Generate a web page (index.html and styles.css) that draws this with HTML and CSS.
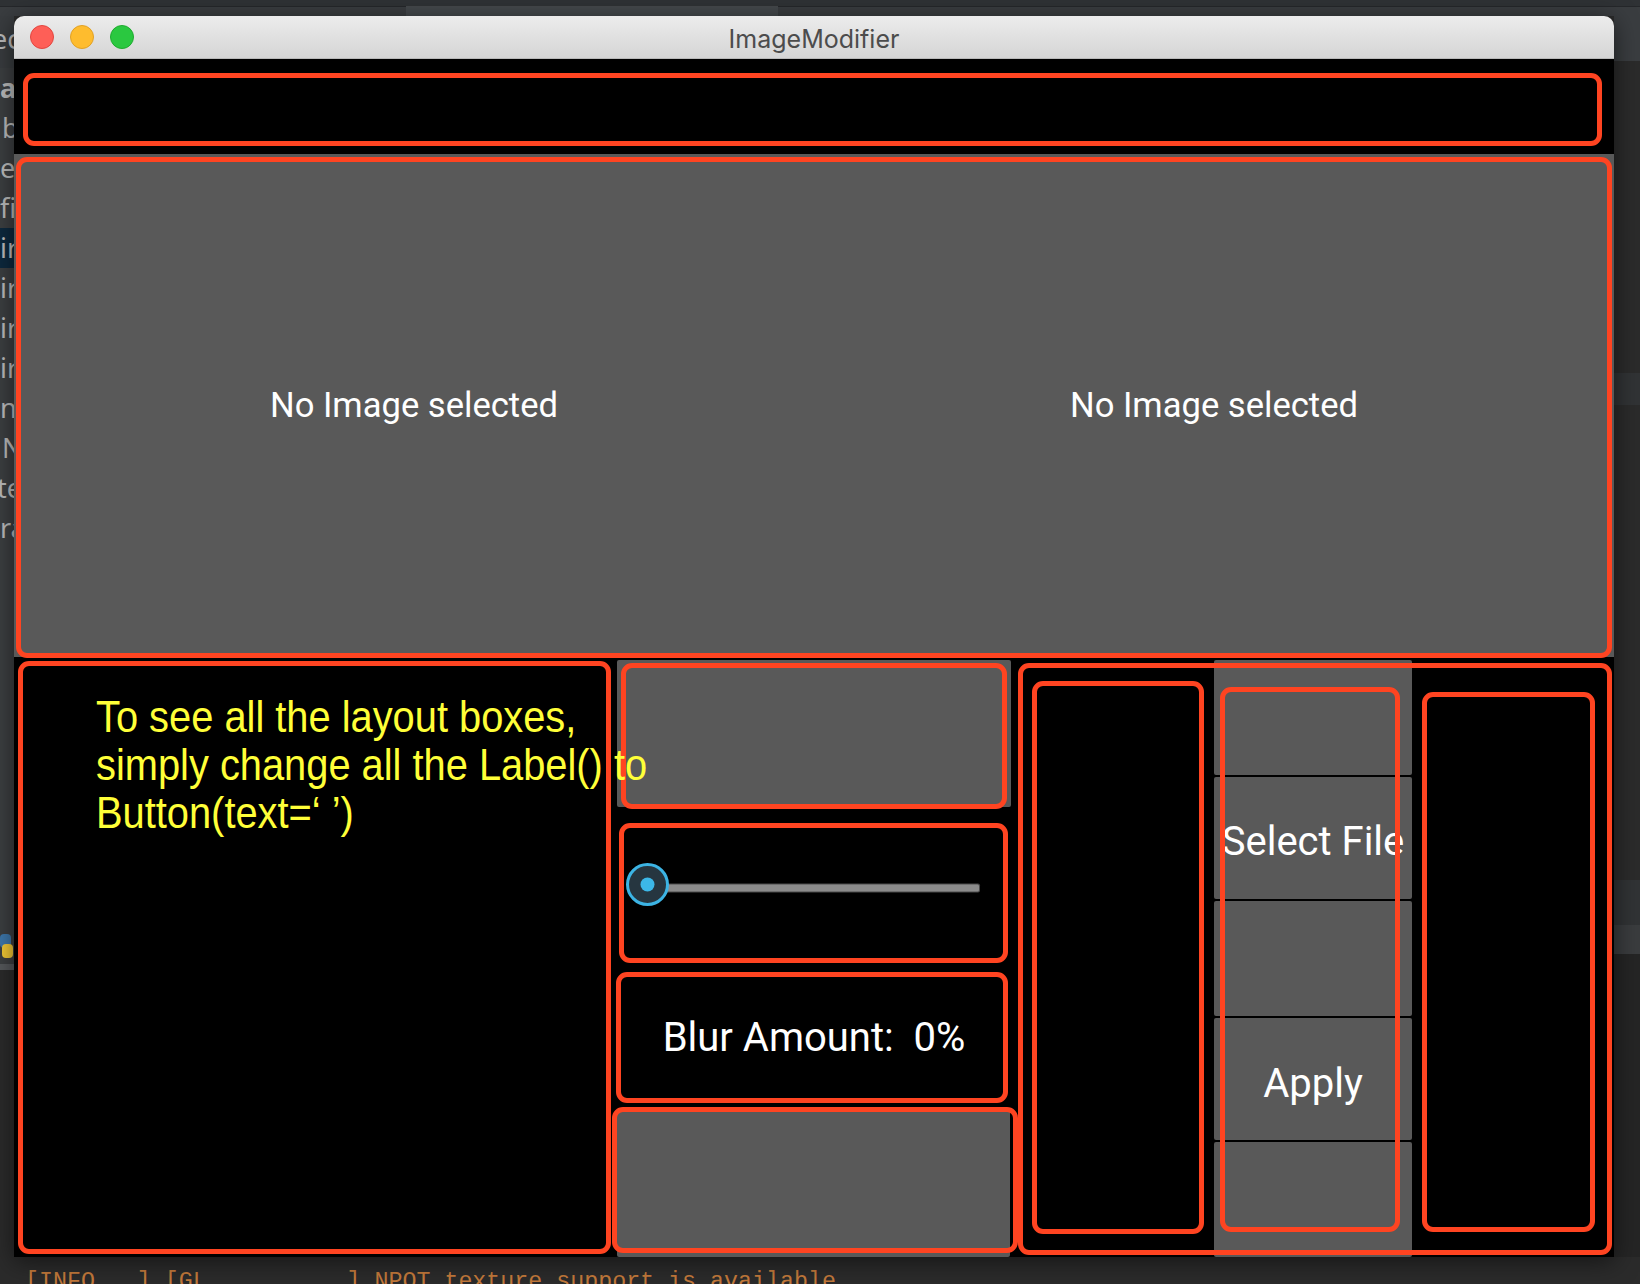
FILE: index.html
```html
<!DOCTYPE html>
<html lang="en">
<head>
<meta charset="utf-8">
<title>ImageModifier</title>
<link rel="stylesheet" href="styles.css">
</head>
<body>
<div class="ide-top"><div class="ide-tab"></div></div>
<div class="desk">
  <div class="ide-left">
    <div class="lhead"><span class="cut8">ec</span></div>
    <div class="lrow bold">ag</div>
    <div class="lrow"><span class="pad2">b</span></div>
    <div class="lrow">e</div>
    <div class="lrow">fi</div>
    <div class="lrow sel">ir</div>
    <div class="lrow">ir</div>
    <div class="lrow">ir</div>
    <div class="lrow">ir</div>
    <div class="lrow">n</div>
    <div class="lrow"><span class="pad2">N</span></div>
    <div class="lrow"><span class="cut3">te</span></div>
    <div class="lrow">ra</div>
    <div class="lspacer"></div>
    <div class="py-icon"><span class="py-b"></span><span class="py-y"></span></div>
    <div class="lline"></div>
    <div class="lrest"></div>
  </div>

  <div class="window">
    <div class="titlebar">
      <div class="lights">
        <span class="light red"></span>
        <span class="light yellow"></span>
        <span class="light green"></span>
      </div>
      <div class="title">ImageModifier</div>
      <div></div>
    </div>

    <div class="content">
      <div class="sec-top cell"><i class="ring ring-top"></i></div>

      <div class="sec-images cell">
        <div class="img-half">No Image selected</div>
        <div class="img-half">No Image selected</div>
        <i class="ring ring-img"></i>
      </div>

      <div class="sec-bottom">
        <div class="col-left cell">
          <div class="note">To see all the layout boxes,<br>simply change all the Label()&nbsp;to<br>Button(text=‘ ’)</div>
          <i class="ring ring-left"></i>
        </div>

        <div class="col-mid">
          <div class="cell m1"><div class="kbtn"></div><i class="ring ring-m1"></i></div>
          <div class="cell m2">
            <svg class="slider" width="400" height="150" viewBox="0 0 400 150" aria-hidden="true">
              <rect x="34" y="76.5" width="332" height="9" rx="2" fill="#4a4a4a"/>
              <rect x="35" y="77.5" width="330" height="7" rx="1.5" fill="#8b8b8b"/>
              <circle cx="33.5" cy="77.5" r="20" fill="#263640" stroke="#3cb4e4" stroke-width="3"/>
              <circle cx="33.5" cy="77.5" r="7" fill="#3cb8e8"/>
            </svg>
            <i class="ring ring-m2"></i>
          </div>
          <div class="cell m3"><div class="blur">Blur Amount:  0%</div><i class="ring ring-m3"></i></div>
          <div class="cell m4"><div class="kbtn"></div><i class="ring ring-m4"></i></div>
        </div>

        <div class="col-right cell">
          <div class="cell r1"><i class="ring ring-r1"></i></div>
          <div class="cell r2">
            <div class="btn-stack">
              <div class="kbtn"></div>
              <div class="kbtn label">Select File</div>
              <div class="kbtn"></div>
              <div class="kbtn label">Apply</div>
              <div class="kbtn"></div>
            </div>
            <i class="ring ring-r2"></i>
          </div>
          <div class="cell r3"><i class="ring ring-r3"></i></div>
          <i class="ring ring-right"></i>
        </div>
      </div>
    </div>
  </div>

  <div class="ide-right">
    <div class="rb rb1"></div>
    <div class="rb rb2"></div>
    <div class="rb rb3"></div>
    <div class="rb rb4"></div>
    <div class="rb rb5"></div>
    <div class="rb rb6"></div>
    <div class="rb rb7"></div>
  </div>
</div>
<div class="ide-log"><div class="logline">[INFO   ] [GL          ] NPOT texture support is available</div></div>
</body>
</html>
```

FILE: styles.css
```css
* { box-sizing: border-box; margin: 0; padding: 0; }

html, body {
  width: 1640px;
  height: 1284px;
  overflow: hidden;
}

body {
  background: #2b2b2b;
  font-family: Roboto, "Liberation Sans", sans-serif;
}

/* ---------- IDE surroundings ---------- */
.ide-top {
  height: 16px;
  background: #3a3d40;
  border-top: 6px solid #2f3235;
  box-shadow: inset 0 1px 0 #25272a;
  display: flex;
}

.ide-tab {
  margin-left: 406px;
  width: 372px;
  height: 10px;
  background: #45494c;
}

.desk {
  display: flex;
  height: 1241px;
}

.ide-left {
  width: 14px;
  flex: none;
  display: flex;
  flex-direction: column;
  overflow: hidden;
  background: #3c3f41;
  color: #bbbbbb;
  font-family: "Noto Sans", "Liberation Sans", sans-serif;
  font-size: 27px;
  white-space: nowrap;
}

.lhead {
  height: 52px;
  line-height: 46px;
  background: #393c3f;
}

.lrow {
  height: 40px;
  line-height: 40px;
}

.lrow.bold { font-weight: 700; }
.lrow.sel { background: #0d293e; }

.cut8 { margin-left: -8px; }
.cut3 { margin-left: -3px; }
.pad2 { margin-left: 2px; }

.lspacer { height: 384px; }

.py-icon {
  height: 32px;
  position: relative;
}

.py-b, .py-y {
  position: absolute;
  width: 11px;
  height: 14px;
  border-radius: 4px;
}

.py-b { left: 0; top: 2px; background: #3d77ab; }
.py-y { left: 2px; top: 12px; background: #f2c935; }

.lline {
  height: 6px;
  background: #55585b;
}

.lrest {
  flex: 1;
  background: #2b2b2b;
}

.ide-right {
  flex: 1;
  display: flex;
  flex-direction: column;
}

.rb1 { height: 45px; background: #3a3d40; }
.rb2 { height: 312px; background: #2b2b2b; }
.rb3 { height: 32px; background: #313335; }
.rb4 { height: 475px; background: #2b2b2b; }
.rb5 { height: 45px; background: #313335; }
.rb6 { height: 29px; background: #3a3c3e; }
.rb7 { flex: 1; background: #252525; }

.ide-log {
  height: 27px;
  overflow: hidden;
  padding: 14px 0 0 25px;
  background: #2b2b2b;
}

.logline {
  font-family: "Liberation Mono", "DejaVu Sans Mono", monospace;
  font-size: 23.3px;
  line-height: 23.3px;
  color: #c47a3b;
  white-space: pre;
}

/* ---------- window ---------- */
.window {
  width: 1600px;
  flex: none;
  display: flex;
  flex-direction: column;
  border-radius: 10px 10px 0 0;
  box-shadow: 0 4px 24px rgba(0, 0, 0, 0.55);
  position: relative;
  z-index: 1;
}

.titlebar {
  height: 43px;
  flex: none;
  display: grid;
  grid-template-columns: 1fr auto 1fr;
  align-items: center;
  background: linear-gradient(#ececec, #d5d5d5);
  border-bottom: 1px solid #b9b9b9;
  border-radius: 10px 10px 0 0;
}

.lights {
  display: flex;
  gap: 16px;
  padding-left: 16px;
}

.light {
  width: 24px;
  height: 24px;
  border-radius: 50%;
}

.light.red { background: #fe5f57; border: 1px solid #e2463f; }
.light.yellow { background: #febc2e; border: 1px solid #e1a125; }
.light.green { background: #2ac840; border: 1px solid #1fab2f; }

.title {
  font-family: Inter, "Noto Sans", sans-serif;
  font-size: 25px;
  color: #4c4c4c;
  padding-top: 4px;
}

.content {
  flex: 1;
  display: flex;
  flex-direction: column;
  background: #000;
}

.cell { position: relative; }

.sec-top { height: 95px; flex: none; }

.sec-images {
  height: 503px;
  flex: none;
  background: #595959;
  display: grid;
  grid-template-columns: 1fr 1fr;
  align-items: center;
  justify-items: center;
}

.img-half {
  color: #ffffff;
  font-size: 34.6px;
  padding-bottom: 2px;
}

.sec-bottom {
  height: 600px;
  flex: none;
  display: flex;
}

.col-left {
  width: 600px;
  padding: 36px 0 0 82px;
}

.note {
  position: relative;
  z-index: 3;
  font-family: "Liberation Sans", Arial, sans-serif;
  font-size: 44px;
  line-height: 48px;
  color: #ffff38;
  white-space: nowrap;
  transform: scaleX(0.905);
  transform-origin: left top;
}

.col-mid {
  width: 400px;
  display: grid;
  grid-template-rows: repeat(4, 150px);
}

.kbtn {
  background: #595959;
  border-radius: 2px;
}

.m1 { padding: 3px 3px 0 3px; display: flex; }
.m1 .kbtn { flex: 1; }

.m4 { padding: 3px 4px 0 3px; display: flex; }
.m4 .kbtn { flex: 1; }

.slider { display: block; }

.m3 {
  display: flex;
  align-items: center;
  justify-content: center;
}

.blur {
  color: #ffffff;
  font-size: 40px;
  white-space: pre;
  padding-top: 10px;
}

.col-right {
  width: 600px;
  display: grid;
  grid-template-columns: repeat(3, 200px);
}

.r2 { padding: 3px 2px 0 0; display: flex; }

.btn-stack {
  flex: 1;
  display: flex;
  flex-direction: column;
  gap: 2px;
}

.btn-stack .kbtn {
  flex: 1;
  display: flex;
  align-items: center;
  justify-content: center;
  color: #ffffff;
  font-size: 40px;
  white-space: nowrap;
}

.btn-stack .label { padding-top: 8px; }

/* ---------- red annotation outlines (overlays) ---------- */
.ring {
  position: absolute;
  z-index: 2;
  border: 5px solid #ff4421;
  border-radius: 11px;
  pointer-events: none;
}

.ring-top   { left: 9px;  top: 14px; right: 12px; bottom: 8px; }
.ring-img   { left: 2px;  top: 3px;  right: 2px;  bottom: -1px; }
.ring-left  { left: 4px;  top: 4px;  right: 3px;  bottom: 3px; }
.ring-m1    { left: 7px;  top: 6px;  right: 7px;  bottom: -2px; }
.ring-m2    { left: 5px;  top: 16px; right: 6px;  bottom: -6px; }
.ring-m3    { left: 2px;  top: 15px; right: 6px;  bottom: 4px; }
.ring-m4    { left: -2px; top: 0;    right: -4px; bottom: 4px; }
.ring-right { left: 4px;  top: 6px;  right: 2px;  bottom: 2px; }
.ring-r1    { left: 18px; top: 24px; right: 10px; bottom: 23px; }
.ring-r2    { left: 6px;  top: 30px; right: 14px; bottom: 25px; }
.ring-r3    { left: 8px;  top: 35px; right: 19px; bottom: 25px; }
```
